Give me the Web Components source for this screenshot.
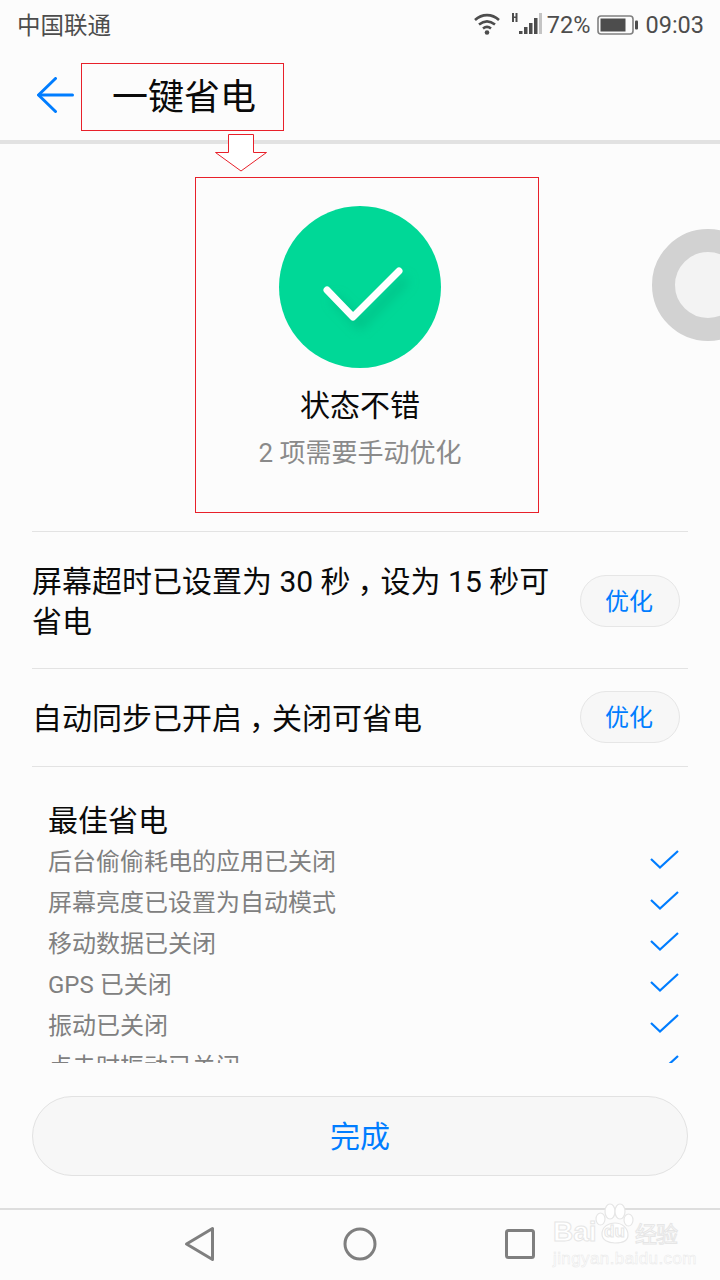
<!DOCTYPE html>
<html lang="zh">
<head>
<meta charset="utf-8">
<title>一键省电</title>
<style>
    html, body {
        margin: 0;
        padding: 0;
        background: #fcfcfc;
    }

    body {
        width: 720px;
        height: 1280px;
        overflow: hidden;
        position: relative;
        font-family: Roboto, "Noto Sans CJK SC", sans-serif;
    }

    power-screen {
        height: 1280px;
    }

    /* the reference sets its comma further into the cell */
    .mid-comma {
        font-feature-settings: "halt";
        padding: 0 8px 0 7px;
    }
</style>
</head>
<body>
<power-screen>
    <status-bar></status-bar>
    <app-header>一键省电</app-header>
    <state-hero heading="状态不错" note="2 项需要手动优化"></state-hero>
    <tip-row class="first">屏幕超时已设置为 30 秒<span class="mid-comma">，</span>设为 15 秒可<br>省电</tip-row>
    <tip-row>自动同步已开启<span class="mid-comma">，</span>关闭可省电</tip-row>
    <best-list heading="最佳省电">
        <check-row>后台偷偷耗电的应用已关闭</check-row>
        <check-row>屏幕亮度已设置为自动模式</check-row>
        <check-row>移动数据已关闭</check-row>
        <check-row>GPS 已关闭</check-row>
        <check-row>振动已关闭</check-row>
        <check-row>点击时振动已关闭</check-row>
    </best-list>
    <done-button>完成</done-button>
    <nav-bar></nav-bar>
</power-screen>
<red-marks></red-marks>
<baidu-mark></baidu-mark>

<script>
    class PowerScreen extends HTMLElement {
        constructor() {
            super();
            this.attachShadow({ mode: 'open' });
        }

        connectedCallback() {
            this.shadowRoot.innerHTML = `
                <style>
                    :host {
                        display: flex;
                        flex-direction: column;
                        width: 720px;
                    }
                </style>
                <slot></slot>
            `;
        }
    }

    class StatusBar extends HTMLElement {
        constructor() {
            super();
            this.attachShadow({ mode: 'open' });
        }

        connectedCallback() {
            this.shadowRoot.innerHTML = `
                <style>
                    :host {
                        display: flex;
                        align-items: center;
                        height: 50px;
                        padding: 0 16px 0 17px;
                        color: #4d4d4d;
                        font-size: 23.500px;
                    }
                    .carrier {
                        flex: 1;
                        font-family: "Noto Sans CJK SC", sans-serif;
                        margin-top: -3px;
                    }
                    .wifi { margin: 0 12px 2px 0; }
                    .signal { margin: 0 5px 3px 0; }
                    .battery { margin: 0 7px 1px 7px; }
                    .pct, .time { font-family: Roboto, sans-serif; }
                </style>
                <span class="carrier">中国联通</span>
                <svg class="wifi" width="26" height="22" viewBox="0 0 26 22" fill="none" stroke="#4d4d4d" stroke-width="2.600">
                    <path d="M1 7C8 .5 18 .5 25 7"/>
                    <path d="M5 11.500C10 7.500 16 7.500 21 11.500"/>
                    <path d="M9 15.500C11.500 13.500 14.500 13.500 17 15.500"/>
                    <circle cx="13" cy="19.500" r="2.300" fill="#4d4d4d" stroke="none"/>
                </svg>
                <svg class="signal" width="30" height="22" viewBox="0 0 30 22">
                    <path d="M0 0h2v3.500h1.500V0h2v9h-2V5H2v4H0z" fill="#4d4d4d"/>
                    <rect x="7" y="18" width="3.500" height="3" fill="#4d4d4d"/>
                    <rect x="12" y="14" width="3.500" height="7" fill="#4d4d4d"/>
                    <rect x="17" y="10" width="3.500" height="11" fill="#4d4d4d"/>
                    <rect x="22" y="5" width="3.500" height="16" fill="#4d4d4d"/>
                    <rect x="27" y="0" width="3" height="21" fill="#c4c4c4"/>
                </svg>
                <span class="pct">72%</span>
                <svg class="battery" width="41" height="20" viewBox="0 0 41 20">
                    <rect x="1" y="1" width="35" height="18" rx="3" fill="none" stroke="#808080" stroke-width="1.600"/>
                    <rect x="3.500" y="3.500" width="25" height="13" fill="#4d4d4d"/>
                    <rect x="38" y="5.500" width="3" height="9" rx="1" fill="#4d4d4d"/>
                </svg>
                <span class="time">09:03</span>
            `;
        }
    }

    class AppHeader extends HTMLElement {
        constructor() {
            super();
            this.attachShadow({ mode: 'open' });
        }

        connectedCallback() {
            this.shadowRoot.innerHTML = `
                <style>
                    :host {
                        display: flex;
                        align-items: center;
                        height: 94px;
                        box-sizing: border-box;
                        padding: 0 0 0 37px;
                        border-bottom: 4px solid #e2e2e2;
                    }
                    svg { margin-right: 38px; }
                    .title {
                        font-family: "Noto Sans CJK SC", sans-serif;
                        font-size: 36px;
                        color: #0a0a0a;
                        line-height: 50px;
                        margin-top: -2px;
                    }
                </style>
                <svg width="37" height="36" viewBox="0 0 37 36" fill="none" stroke="#007dff" stroke-width="3" stroke-linecap="round" stroke-linejoin="round">
                    <path d="M18.500 1.500L1.500 18L18.500 34.500"/>
                    <path d="M2 18H35.500"/>
                </svg>
                <span class="title"><slot></slot></span>
            `;
        }
    }

    class StateHero extends HTMLElement {
        constructor() {
            super();
            this.attachShadow({ mode: 'open' });
        }

        connectedCallback() {
            const heading = this.getAttribute('heading') || '';
            const note = this.getAttribute('note') || '';

            this.shadowRoot.innerHTML = `
                <style>
                    :host {
                        display: flex;
                        flex-direction: column;
                        align-items: center;
                        position: relative;
                        height: 387px;
                        overflow: hidden;
                        padding-top: 62px;
                        box-sizing: border-box;
                    }
                    .disc {
                        width: 162px;
                        height: 162px;
                        border-radius: 50%;
                        background: #00d897;
                        flex: none;
                    }
                    .heading {
                        margin-top: 13px;
                        font-family: "Noto Sans CJK SC", sans-serif;
                        font-size: 30px;
                        line-height: 44px;
                        color: #0a0a0a;
                    }
                    .note {
                        margin-top: 10px;
                        font-family: Roboto, "Noto Sans CJK SC", sans-serif;
                        font-size: 26px;
                        line-height: 36px;
                        color: #8a8a8a;
                    }
                    .next {
                        position: absolute;
                        left: 652px;
                        top: 85px;
                        width: 112px;
                        height: 112px;
                        box-sizing: border-box;
                        border-radius: 50%;
                        border: 23px solid #d2d2d2;
                        background: #f3f3f3;
                    }
                </style>
                <svg class="disc" viewBox="0 0 162 162">
                    <defs>
                        <filter id="soft" x="-30%" y="-30%" width="160%" height="160%">
                            <feGaussianBlur stdDeviation="6"/>
                        </filter>
                    </defs>
                    <path d="M48 84L74 111L120 65" transform="translate(7 8)" fill="none" stroke="#00a877" stroke-opacity=".55" stroke-width="7" filter="url(#soft)"/>
                    <path d="M48 84L74 111L120 65" fill="none" stroke="#fff" stroke-width="7" stroke-linecap="round" stroke-linejoin="round"/>
                </svg>
                <div class="heading">${heading}</div>
                <div class="note">${note}</div>
                <div class="next"></div>
            `;
        }
    }

    class TipRow extends HTMLElement {
        constructor() {
            super();
            this.attachShadow({ mode: 'open' });
        }

        connectedCallback() {
            this.shadowRoot.innerHTML = `
                <style>
                    :host {
                        display: flex;
                        align-items: center;
                        gap: 22px;
                        margin: 0 32px;
                        padding: 22px 8px 23px 0;
                        border-bottom: 1px solid #e3e3e3;
                        color: #0a0a0a;
                    }
                    :host(.first) {
                        border-top: 1px solid #e3e3e3;
                        padding-top: 27px;
                        padding-bottom: 26px;
                    }
                    .text {
                        flex: 1;
                        padding-top: 3px;
                        height: 40px;
                        font-family: Roboto, "Noto Sans CJK SC", sans-serif;
                        font-size: 30px;
                        line-height: 40px;
                    }
                    :host(.first) .text {
                        height: 80px;
                    }
                    button {
                        flex: none;
                        width: 100px;
                        height: 52px;
                        padding: 0 2px 3px 0;
                        border: 1px solid #e6e6e6;
                        border-radius: 26px;
                        background: #f7f7f7;
                        color: #007dff;
                        font-family: "Noto Sans CJK SC", sans-serif;
                        font-size: 24px;
                    }
                </style>
                <div class="text"><slot></slot></div>
                <button>优化</button>
            `;
        }
    }

    class BestList extends HTMLElement {
        constructor() {
            super();
            this.attachShadow({ mode: 'open' });
        }

        connectedCallback() {
            const heading = this.getAttribute('heading') || '';

            this.shadowRoot.innerHTML = `
                <style>
                    :host {
                        display: block;
                        height: 296px;
                        overflow: hidden;
                        padding: 31px 41px 0 48px;
                        box-sizing: border-box;
                    }
                    .heading {
                        font-family: "Noto Sans CJK SC", sans-serif;
                        font-size: 30px;
                        line-height: 41px;
                        color: #0a0a0a;
                    }
                </style>
                <div class="heading">${heading}</div>
                <slot></slot>
            `;
        }
    }

    class CheckRow extends HTMLElement {
        constructor() {
            super();
            this.attachShadow({ mode: 'open' });
        }

        connectedCallback() {
            this.shadowRoot.innerHTML = `
                <style>
                    :host {
                        display: flex;
                        align-items: center;
                        justify-content: space-between;
                        height: 41px;
                        font-family: Roboto, "Noto Sans CJK SC", sans-serif;
                        font-size: 24px;
                        color: #808080;
                    }
                </style>
                <span><slot></slot></span>
                <svg width="29" height="20" viewBox="0 0 29 20" fill="none" stroke="#007dff" stroke-width="2.200">
                    <path d="M1 9L10 17.500L28 1"/>
                </svg>
            `;
        }
    }

    class DoneButton extends HTMLElement {
        constructor() {
            super();
            this.attachShadow({ mode: 'open' });
        }

        connectedCallback() {
            this.shadowRoot.innerHTML = `
                <style>
                    :host {
                        display: block;
                        margin: 33px 32px 32px;
                    }
                    button {
                        display: block;
                        width: 100%;
                        height: 80px;
                        padding: 0 0 4px;
                        border: 1px solid #e2e2e2;
                        border-radius: 40px;
                        background: #f7f7f7;
                        color: #007dff;
                        font-family: "Noto Sans CJK SC", sans-serif;
                        font-size: 30px;
                    }
                </style>
                <button><slot></slot></button>
            `;
        }
    }

    class NavBar extends HTMLElement {
        constructor() {
            super();
            this.attachShadow({ mode: 'open' });
        }

        connectedCallback() {
            this.shadowRoot.innerHTML = `
                <style>
                    :host {
                        display: grid;
                        grid-template-columns: 159px 162px 30px;
                        justify-content: start;
                        align-items: center;
                        height: 67px;
                        padding: 0 0 0 184px;
                        border-top: 2px solid #dedede;
                    }
                    svg { display: block; fill: none; stroke: #7f7f7f; stroke-width: 3; }
                </style>
                <svg width="32" height="36" viewBox="0 0 32 36"><path d="M28.500 2.500V33.500L2.500 18Z" stroke-linejoin="round"/></svg>
                <svg width="34" height="34" viewBox="0 0 34 34"><circle cx="17" cy="17" r="15"/></svg>
                <svg width="30" height="30" viewBox="0 0 30 30"><rect x="1.500" y="1.500" width="27" height="27" rx="2"/></svg>
            `;
        }
    }

    // annotation layer drawn over the screenshot
    class RedMarks extends HTMLElement {
        constructor() {
            super();
            this.attachShadow({ mode: 'open' });
        }

        connectedCallback() {
            this.shadowRoot.innerHTML = `
                <style>
                    :host {
                        display: block;
                        position: absolute;
                        left: 0;
                        top: 0;
                        width: 720px;
                        height: 520px;
                        pointer-events: none;
                    }
                    svg { display: block; }
                </style>
                <svg width="720" height="520" viewBox="0 0 720 520" fill="none" stroke="#e8202a" stroke-width="1">
                    <rect x="81.500" y="63.500" width="202" height="67"/>
                    <path d="M228.500 134.500H253.500V152.500H266.500L241 171L215.500 152.500H228.500Z" fill="#fff"/>
                    <rect x="195.500" y="177.500" width="343" height="335"/>
                </svg>
            `;
        }
    }

    class BaiduMark extends HTMLElement {
        constructor() {
            super();
            this.attachShadow({ mode: 'open' });
        }

        connectedCallback() {
            this.shadowRoot.innerHTML = `
                <style>
                    :host {
                        display: block;
                        position: absolute;
                        left: 552px;
                        top: 1202px;
                        width: 130px;
                        height: 66px;
                        pointer-events: none;
                        font-family: "Liberation Sans", sans-serif;
                        color: #fff;
                        -webkit-text-stroke: 1px #e6e6e6;
                    }
                    span { position: absolute; white-space: nowrap; }
                    .bai { left: 1px; top: 14px; font-size: 28px; font-weight: bold; line-height: 32px; }
                    .du { left: 52px; top: 21px; font-size: 17px; font-weight: bold; line-height: 18px; }
                    .cn { left: 83px; top: 17px; font-size: 22px; line-height: 26px; letter-spacing: -1px; font-family: "Noto Sans CJK SC", sans-serif; }
                    .url { left: 1px; top: 48px; font-size: 17px; line-height: 18px; -webkit-text-stroke: .5px #e8e8e8; letter-spacing: .4px; }
                    svg { position: absolute; left: 43px; top: 1px; }
                </style>
                <svg width="40" height="42" viewBox="0 0 40 42" fill="#fff" stroke="#e6e6e6" stroke-width="1.200">
                    <ellipse cx="5.500" cy="16" rx="4.500" ry="6"/>
                    <ellipse cx="15" cy="8.500" rx="5" ry="7.500"/>
                    <ellipse cx="25" cy="8.500" rx="5" ry="7.500"/>
                    <ellipse cx="33.500" cy="17" rx="4.500" ry="6"/>
                    <path d="M7 31C7 24 13 20 20 20C27 20 33 25 33 32C33 38 27 40 20 40C13 40 7 37 7 31Z"/>
                </svg>
                <span class="bai">Bai</span>
                <span class="du">du</span>
                <span class="cn">经验</span>
                <span class="url">jingyan.baidu.com</span>
            `;
        }
    }

    customElements.define('power-screen', PowerScreen);
    customElements.define('status-bar', StatusBar);
    customElements.define('app-header', AppHeader);
    customElements.define('state-hero', StateHero);
    customElements.define('tip-row', TipRow);
    customElements.define('best-list', BestList);
    customElements.define('check-row', CheckRow);
    customElements.define('done-button', DoneButton);
    customElements.define('nav-bar', NavBar);
    customElements.define('red-marks', RedMarks);
    customElements.define('baidu-mark', BaiduMark);
</script>
</body>
</html>
